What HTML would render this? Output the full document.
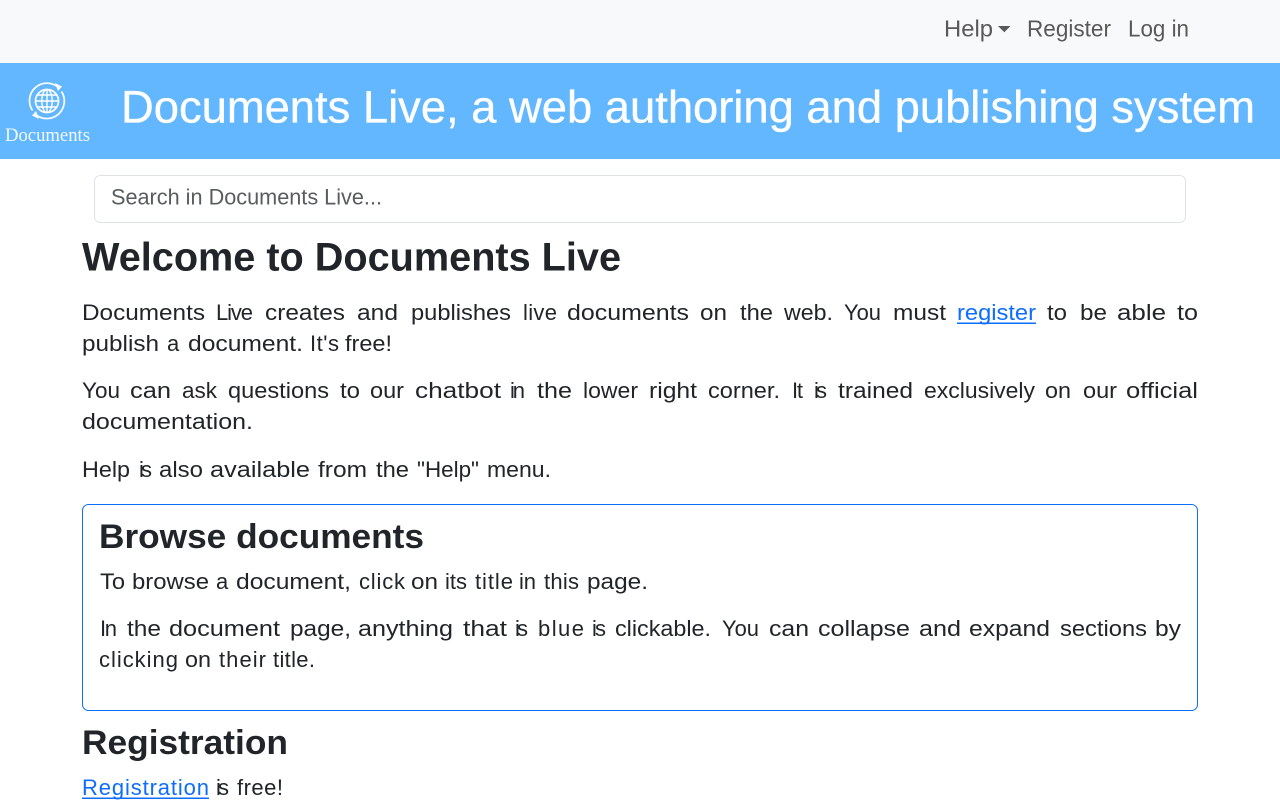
<!DOCTYPE html>
<html lang="en"><head><meta charset="utf-8"><title>Documents Live</title>
<style>
html,body{margin:0;padding:0;width:1280px;height:800px;overflow:hidden;background:#fff}
svg{display:block}
text{font-family:"Liberation Sans",sans-serif}
.b text{font-size:22px;fill:#212529}
.l{fill:#0d6efd!important}
.n text{font-size:23.5px;fill:#595959}
.h{font-weight:bold;fill:#212529}
</style></head><body>
<svg width="1280" height="800" viewBox="0 0 1280 800" xmlns="http://www.w3.org/2000/svg">
<rect width="1280" height="800" fill="#fff"/>
<rect width="1280" height="63" fill="#f8f9fa"/>
<rect y="63" width="1280" height="96" fill="#63b7ff"/>
<g class="n">
<text x="944" y="36.5" textLength="49" lengthAdjust="spacingAndGlyphs">Help</text>
<path d="M998 26h12.5l-6.2 6.2z" fill="#595959"/>
<text x="1027" y="36.5" textLength="84" lengthAdjust="spacingAndGlyphs">Register</text>
<text x="1128" y="36.5" textLength="61" lengthAdjust="spacingAndGlyphs">Log in</text>
</g>
<g fill="none" stroke="#fff">
<circle cx="47" cy="101" r="11.5" stroke-width="1.7"/>
<ellipse cx="47" cy="101" rx="5.2" ry="11.5" stroke-width="1.4"/>
<path d="M47 89.5v23M35.5 101h23M37 95h20M37 107h20" stroke-width="1.4"/>
<path d="M32.5 110.5A17.5 17.5 0 0 1 58.5 87.5" stroke-width="1.7"/>
<path d="M61.5 91.5A17.5 17.5 0 0 1 36 114.8" stroke-width="1.7"/>
</g>
<path d="M55 83l7 3.5-4 4.5z" fill="#fff"/>
<path d="M39 119l-7-3.5 4-4.5z" fill="#fff"/>
<text x="5" y="141" textLength="85" lengthAdjust="spacingAndGlyphs" style="font-family:'Liberation Serif',serif;font-size:18.5px;fill:#fff" opacity=".92">Documents</text>
<text x="121" y="122.5" textLength="1134" lengthAdjust="spacingAndGlyphs" style="font-size:45px;fill:#fff;stroke:#fff;stroke-width:.35">Documents Live, a web authoring and publishing system</text>
<rect x="94.5" y="175.5" width="1091" height="47" rx="6" fill="#fff" stroke="#dee2e6"/>
<text x="111" y="204.5" textLength="271" lengthAdjust="spacingAndGlyphs" style="font-size:22px;fill:#595c5f">Search in Documents Live...</text>
<text class="h" x="82" y="270.5" textLength="539" lengthAdjust="spacingAndGlyphs" style="font-size:39.5px">Welcome to Documents Live</text>
<g class="b">
<text x="82" y="320" textLength="123" lengthAdjust="spacingAndGlyphs">Documents</text>
<text x="216" y="320" textLength="37" lengthAdjust="spacing">Live</text>
<text x="265" y="320" textLength="80" lengthAdjust="spacingAndGlyphs">creates</text>
<text x="357" y="320" textLength="41" lengthAdjust="spacingAndGlyphs">and</text>
<text x="411" y="320" textLength="100" lengthAdjust="spacingAndGlyphs">publishes</text>
<text x="523" y="320" textLength="34" lengthAdjust="spacing">live</text>
<text x="567" y="320" textLength="122" lengthAdjust="spacingAndGlyphs">documents</text>
<text x="700" y="320" textLength="27" lengthAdjust="spacingAndGlyphs">on</text>
<text x="740" y="320" textLength="33" lengthAdjust="spacingAndGlyphs">the</text>
<text x="784" y="320" textLength="49" lengthAdjust="spacingAndGlyphs">web.</text>
<text x="844" y="320" textLength="37" lengthAdjust="spacingAndGlyphs">You</text>
<text x="893" y="320" textLength="53" lengthAdjust="spacingAndGlyphs">must</text>
<text class="l" x="957" y="320" textLength="79" lengthAdjust="spacingAndGlyphs">register</text>
<rect x="957" y="322.5" width="79" height="1.5" fill="#0d6efd"/>
<text x="1047" y="320" textLength="20" lengthAdjust="spacingAndGlyphs">to</text>
<text x="1080" y="320" textLength="27" lengthAdjust="spacingAndGlyphs">be</text>
<text x="1117" y="320" textLength="49" lengthAdjust="spacingAndGlyphs">able</text>
<text x="1177" y="320" textLength="21" lengthAdjust="spacingAndGlyphs">to</text>

<text x="82" y="351" textLength="77" lengthAdjust="spacingAndGlyphs">publish</text>
<text x="167" y="351" textLength="12" lengthAdjust="spacing">a</text>
<text x="188" y="351" textLength="115" lengthAdjust="spacingAndGlyphs">document.</text>
<text x="310" y="351" textLength="29" lengthAdjust="spacing">It's</text>
<text x="345" y="351" textLength="47" lengthAdjust="spacingAndGlyphs">free!</text>

<text x="82" y="398" textLength="38" lengthAdjust="spacingAndGlyphs">You</text>
<text x="130" y="398" textLength="41" lengthAdjust="spacingAndGlyphs">can</text>
<text x="182" y="398" textLength="35" lengthAdjust="spacingAndGlyphs">ask</text>
<text x="228" y="398" textLength="101" lengthAdjust="spacingAndGlyphs">questions</text>
<text x="340" y="398" textLength="20" lengthAdjust="spacingAndGlyphs">to</text>
<text x="370" y="398" textLength="34" lengthAdjust="spacingAndGlyphs">our</text>
<text x="415" y="398" textLength="86" lengthAdjust="spacingAndGlyphs">chatbot</text>
<text x="510" y="398" textLength="15" lengthAdjust="spacing">in</text>
<text x="537" y="398" textLength="35" lengthAdjust="spacingAndGlyphs">the</text>
<text x="583" y="398" textLength="55" lengthAdjust="spacingAndGlyphs">lower</text>
<text x="649" y="398" textLength="48" lengthAdjust="spacingAndGlyphs">right</text>
<text x="708" y="398" textLength="72" lengthAdjust="spacingAndGlyphs">corner.</text>
<text x="792" y="398" textLength="11" lengthAdjust="spacing">It</text>
<text x="814" y="398" textLength="13" lengthAdjust="spacing">is</text>
<text x="838" y="398" textLength="75" lengthAdjust="spacingAndGlyphs">trained</text>
<text x="924" y="398" textLength="111" lengthAdjust="spacingAndGlyphs">exclusively</text>
<text x="1045" y="398" textLength="26" lengthAdjust="spacingAndGlyphs">on</text>
<text x="1083" y="398" textLength="34" lengthAdjust="spacingAndGlyphs">our</text>
<text x="1126" y="398" textLength="72" lengthAdjust="spacingAndGlyphs">official</text>

<text x="82" y="429" textLength="171" lengthAdjust="spacingAndGlyphs">documentation.</text>

<text x="82" y="477" textLength="48" lengthAdjust="spacingAndGlyphs">Help</text>
<text x="139" y="477" textLength="13" lengthAdjust="spacing">is</text>
<text x="159" y="477" textLength="44" lengthAdjust="spacingAndGlyphs">also</text>
<text x="210" y="477" textLength="100" lengthAdjust="spacingAndGlyphs">available</text>
<text x="318" y="477" textLength="49" lengthAdjust="spacingAndGlyphs">from</text>
<text x="376" y="477" textLength="33" lengthAdjust="spacingAndGlyphs">the</text>
<text x="417" y="477" textLength="62" lengthAdjust="spacingAndGlyphs">"Help"</text>
<text x="487" y="477" textLength="64" lengthAdjust="spacingAndGlyphs">menu.</text>
</g>
<rect x="82.5" y="504.5" width="1115" height="206" rx="6" fill="none" stroke="#0d6efd"/>
<text class="h" x="99" y="548" textLength="325" lengthAdjust="spacingAndGlyphs" style="font-size:34.5px">Browse documents</text>
<g class="b">
<text x="100" y="589" textLength="25" lengthAdjust="spacingAndGlyphs">To</text>
<text x="132" y="589" textLength="77" lengthAdjust="spacingAndGlyphs">browse</text>
<text x="216" y="589" textLength="12" lengthAdjust="spacing">a</text>
<text x="236" y="589" textLength="115" lengthAdjust="spacingAndGlyphs">document,</text>
<text x="359" y="589" textLength="46" lengthAdjust="spacing">click</text>
<text x="411" y="589" textLength="27" lengthAdjust="spacingAndGlyphs">on</text>
<text x="445" y="589" textLength="22" lengthAdjust="spacing">its</text>
<text x="475" y="589" textLength="38" lengthAdjust="spacing">title</text>
<text x="519" y="589" textLength="17" lengthAdjust="spacing">in</text>
<text x="544" y="589" textLength="35" lengthAdjust="spacing">this</text>
<text x="587" y="589" textLength="61" lengthAdjust="spacingAndGlyphs">page.</text>

<text x="100" y="636" textLength="17" lengthAdjust="spacing">In</text>
<text x="127" y="636" textLength="34" lengthAdjust="spacingAndGlyphs">the</text>
<text x="169" y="636" textLength="111" lengthAdjust="spacingAndGlyphs">document</text>
<text x="290" y="636" textLength="61" lengthAdjust="spacingAndGlyphs">page,</text>
<text x="358" y="636" textLength="95" lengthAdjust="spacingAndGlyphs">anything</text>
<text x="463" y="636" textLength="44" lengthAdjust="spacingAndGlyphs">that</text>
<text x="515" y="636" textLength="13" lengthAdjust="spacing">is</text>
<text x="538" y="636" textLength="46" lengthAdjust="spacing">blue</text>
<text x="592" y="636" textLength="14" lengthAdjust="spacing">is</text>
<text x="615" y="636" textLength="96" lengthAdjust="spacingAndGlyphs">clickable.</text>
<text x="722" y="636" textLength="37" lengthAdjust="spacingAndGlyphs">You</text>
<text x="769" y="636" textLength="40" lengthAdjust="spacingAndGlyphs">can</text>
<text x="818" y="636" textLength="92" lengthAdjust="spacingAndGlyphs">collapse</text>
<text x="919" y="636" textLength="42" lengthAdjust="spacingAndGlyphs">and</text>
<text x="969" y="636" textLength="81" lengthAdjust="spacingAndGlyphs">expand</text>
<text x="1060" y="636" textLength="87" lengthAdjust="spacingAndGlyphs">sections</text>
<text x="1155" y="636" textLength="26" lengthAdjust="spacingAndGlyphs">by</text>

<text x="99" y="667" textLength="79" lengthAdjust="spacing">clicking</text>
<text x="185" y="667" textLength="26" lengthAdjust="spacingAndGlyphs">on</text>
<text x="219" y="667" textLength="47" lengthAdjust="spacing">their</text>
<text x="273" y="667" textLength="42" lengthAdjust="spacing">title.</text>
</g>
<text class="h" x="82" y="754" textLength="206" lengthAdjust="spacingAndGlyphs" style="font-size:34.5px">Registration</text>
<g class="b">
<text class="l" x="82" y="795" textLength="127" lengthAdjust="spacing">Registration</text>
<rect x="82" y="797.5" width="127" height="1.5" fill="#0d6efd"/>
<text x="216" y="795" textLength="13" lengthAdjust="spacing">is</text>
<text x="237" y="795" textLength="46" lengthAdjust="spacing">free!</text>
</g>
</svg>
</body></html>
